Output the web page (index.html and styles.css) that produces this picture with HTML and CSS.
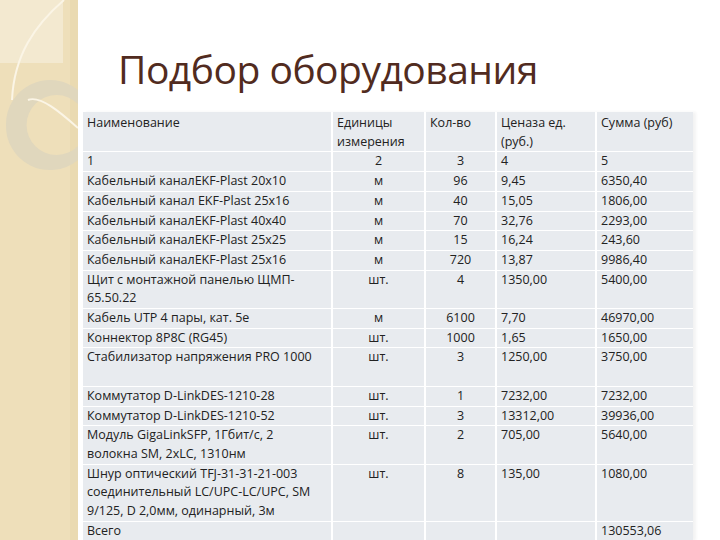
FILE: index.html
```html
<!DOCTYPE html>
<html lang="ru">
<head>
<meta charset="utf-8">
<title>Подбор оборудования</title>
<link rel="stylesheet" href="styles.css">
</head>
<body>
<div class="slide">
  <div class="strip">
    <svg class="deco" width="78" height="540" viewBox="0 0 78 540">
      <rect x="0" y="0" width="78" height="540" fill="#eedfba"/>
      <rect x="70" y="0" width="8" height="540" fill="#eadab1"/>
      <rect x="0" y="0" width="63" height="63" fill="#f3e9d0"/>
      <path d="M6 124 A44 44 0 0 1 78 90 L78 104 A30 30 0 1 0 78 146 L78 160 A44 44 0 0 1 6 124 Z" fill="#e0d7bd"/>
      <path d="M64 0 C35 25 14 55 12 100" fill="none" stroke="#fbf5e6" stroke-width="2"/>
      <path d="M28 100 C40 95 60 112 78 128" fill="none" stroke="#fbf5e6" stroke-width="2"/>
    </svg>
  </div>
  <div class="main">
    <h1 class="title">Подбор оборудования</h1>
    <table class="grid">
      <colgroup>
        <col class="c1"><col class="c2"><col class="c3"><col class="c4"><col class="c5">
      </colgroup>
      <tr class="head">
        <td>Наименование</td>
        <td>Единицы измерения</td>
        <td>Кол-во</td>
        <td>Ценаза ед. (руб.)</td>
        <td>Сумма (руб)</td>
      </tr>
      <tr><td>1</td><td class="ctr">2</td><td class="ctr">3</td><td>4</td><td>5</td></tr>
      <tr><td>Кабельный каналEKF-Plast 20x10</td><td class="ctr">м</td><td class="ctr">96</td><td>9,45</td><td>6350,40</td></tr>
      <tr><td>Кабельный канал EKF-Plast 25x16</td><td class="ctr">м</td><td class="ctr">40</td><td>15,05</td><td>1806,00</td></tr>
      <tr><td>Кабельный каналEKF-Plast 40x40</td><td class="ctr">м</td><td class="ctr">70</td><td>32,76</td><td>2293,00</td></tr>
      <tr><td>Кабельный каналEKF-Plast 25x25</td><td class="ctr">м</td><td class="ctr">15</td><td>16,24</td><td>243,60</td></tr>
      <tr><td>Кабельный каналEKF-Plast 25x16</td><td class="ctr">м</td><td class="ctr">720</td><td>13,87</td><td>9986,40</td></tr>
      <tr><td>Щит с монтажной панелью ЩМП-<br>65.50.22</td><td class="ctr">шт.</td><td class="ctr">4</td><td>1350,00</td><td>5400,00</td></tr>
      <tr><td>Кабель UTP 4 пары, кат. 5e</td><td class="ctr">м</td><td class="ctr">6100</td><td>7,70</td><td>46970,00</td></tr>
      <tr><td>Коннектор 8P8C (RG45)</td><td class="ctr">шт.</td><td class="ctr">1000</td><td>1,65</td><td>1650,00</td></tr>
      <tr><td class="two">Стабилизатор напряжения PRO 1000</td><td class="ctr">шт.</td><td class="ctr">3</td><td>1250,00</td><td>3750,00</td></tr>
      <tr><td>Коммутатор D-LinkDES-1210-28</td><td class="ctr">шт.</td><td class="ctr">1</td><td>7232,00</td><td>7232,00</td></tr>
      <tr><td>Коммутатор D-LinkDES-1210-52</td><td class="ctr">шт.</td><td class="ctr">3</td><td>13312,00</td><td>39936,00</td></tr>
      <tr><td>Модуль GigaLinkSFP, 1Гбит/с, 2<br>волокна SM, 2xLC, 1310нм</td><td class="ctr">шт.</td><td class="ctr">2</td><td>705,00</td><td>5640,00</td></tr>
      <tr><td>Шнур оптический TFJ-31-31-21-003<br>соединительный LC/UPC-LC/UPC, SM<br>9/125, D 2,0мм, одинарный, 3м</td><td class="ctr">шт.</td><td class="ctr">8</td><td>135,00</td><td>1080,00</td></tr>
      <tr><td>Всего</td><td></td><td></td><td></td><td>130553,06</td></tr>
    </table>
  </div>
</div>
</body>
</html>
```
FILE: styles.css
```css
html, body {
  margin: 0;
  padding: 0;
  background: #ffffff;
}
.slide {
  width: 720px;
  height: 540px;
  overflow: hidden;
  display: flex;
  background: #ffffff;
}
.strip {
  width: 78px;
  flex: none;
  height: 540px;
}
.deco {
  display: block;
}
.main {
  flex: 1;
  padding-left: 5px;
}
.title {
  margin: 0;
  padding: 44px 0 0 35px;
  height: 68px;
  font-family: "Open Sans", "Noto Sans", sans-serif;
  font-weight: 400;
  font-size: 39px;
  line-height: 50px;
  color: #512b20;
  letter-spacing: -0.5px;
  white-space: nowrap;
}
.grid {
  border-collapse: separate;
  border-spacing: 0;
  width: 610px;
  table-layout: fixed;
  font-family: "Open Sans", "Noto Sans", sans-serif;
  font-size: 12.5px;
  color: #222222;
  box-shadow: 3px 0 3px rgba(0, 0, 0, 0.05);
}
.c1 { width: 250px; }
.c2 { width: 93px; }
.c3 { width: 71px; }
.c4 { width: 100px; }
.c5 { width: 96px; }
.grid td {
  background: #e8ebef;
  vertical-align: top;
  padding: 0 4px;
  line-height: 18.7px;
  border-bottom: 1.5px solid #ffffff;
  border-right: 2px solid #ffffff;
  white-space: nowrap;
}
.grid td:last-child {
  border-right: none;
}
.grid .head td {
  padding-top: 2px;
  white-space: normal;
}
.grid td.ctr {
  text-align: center;
}
.grid td.two {
  height: 37.4px;
}
```
